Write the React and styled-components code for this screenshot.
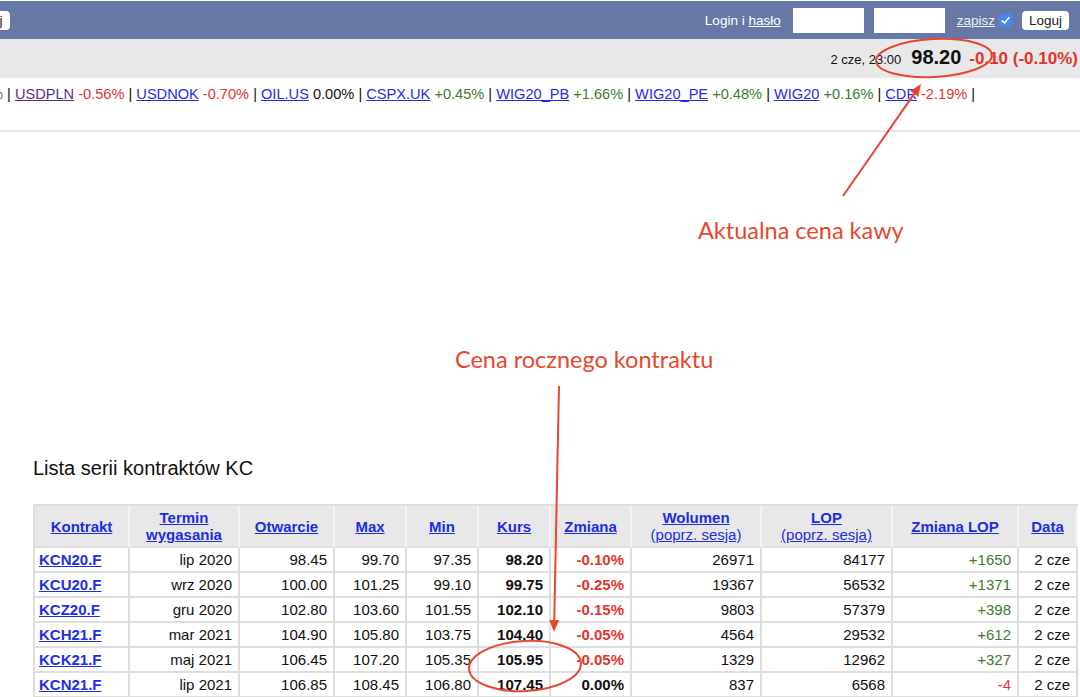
import React from "react";
import styled, { createGlobalStyle } from "styled-components";

const GlobalStyle = createGlobalStyle`
  html, body { margin: 0; padding: 0; background: #fff; }
  body { font-family: "Liberation Sans", Arial, sans-serif; color: #111; }
  a { cursor: pointer; }
`;

const RED = "#e3342f";
const GREEN = "#3c7d2c";
const BLUE = "#1d2ee6";
const NOTE = "#e8472f";

const toneColor = (tone) =>
  tone === "down" ? RED : tone === "up" ? GREEN : "#111";

const Page = styled.div`
  position: relative;
  width: 1080px;
  height: 697px;
  overflow: hidden;
  background: #fff;
`;

// top bar with login form
const TopBar = styled.div`
  margin-top: 1px;
  height: 38px;
  background: #6878a6;
  display: flex;
  align-items: center;
  justify-content: space-between;
  padding-right: 11px;
  color: #fff;
  font-size: 13.5px;
`;

const BarButton = styled.button`
  height: 19px;
  padding: 0 7px;
  border: none;
  border-radius: 4px;
  background: #fff;
  color: #222;
  font-family: inherit;
  font-size: 13.5px;
  margin-left: ${(p) => p.$offset || 0}px;
`;

const LoginForm = styled.div`
  display: flex;
  align-items: center;
`;

const LoginLabel = styled.span`
  margin-right: 12px;
  a {
    color: #fff;
    text-decoration: underline;
  }
`;

const LoginInput = styled.input`
  width: 71px;
  height: 25px;
  box-sizing: border-box;
  border: none;
  background: #fff;
  margin-right: ${(p) => p.$gap}px;
`;

const SaveLink = styled.a`
  color: #eef0f8;
  text-decoration: underline;
  margin-right: 4px;
`;

const Check = styled.span`
  width: 13px;
  height: 13px;
  border-radius: 3px;
  background: #4a86f0;
  display: inline-flex;
  align-items: center;
  justify-content: center;
  margin-right: 10px;
`;

// quote bar
const PriceBar = styled.div`
  height: 39px;
  background: #e8e8e8;
  display: flex;
  justify-content: flex-end;
  align-items: baseline;
  padding-right: 2px;
  box-sizing: border-box;
  padding-top: 7px;
`;

const PriceDate = styled.span`
  font-size: 13px;
  margin-right: 10px;
`;

const PriceValue = styled.span`
  font-size: 20px;
  font-weight: bold;
  margin-right: 8px;
`;

const PriceChange = styled.span`
  font-size: 17px;
  font-weight: bold;
  color: ${RED};
`;

// ticker
const Ticker = styled.div`
  height: 54px;
  box-sizing: border-box;
  padding-top: 7px;
  border-bottom: 2px solid #e6e6e6;
  font-size: 14.6px;
  line-height: 18px;
  white-space: nowrap;
`;

const Lead = styled.span`
  margin-left: -10px;
  color: ${GREEN};
`;

const TickLink = styled.a`
  color: ${(p) => (p.$visited ? "#5b2d8e" : BLUE)};
  text-decoration: underline;
`;

const TickValue = styled.span`
  color: ${(p) => toneColor(p.$tone)};
`;

// contracts section
const Section = styled.div`
  padding: 325px 0 0 33px;
`;

const Title = styled.div`
  font-size: 20px;
  line-height: 23px;
  margin-bottom: 24px;
`;

const Table = styled.table`
  border-spacing: 0;
  border-top: 2px solid #dedede;
  border-left: 2px solid #dedede;
  table-layout: fixed;
  width: 1043px;
  font-size: 15px;
  line-height: 17px;
`;

const Th = styled.th`
  background: #e8e8e8;
  padding: 3px 4px;
  border-right: 2px solid #f4f4f4;
  border-bottom: 2px solid #dedede;
  text-align: center;
  font-weight: bold;
  a {
    color: ${BLUE};
    text-decoration: underline;
  }
`;

const Sub = styled.a`
  font-weight: normal;
`;

const Td = styled.td`
  padding: 3px 6px 3px 4px;
  border-right: 2px solid #dedede;
  border-bottom: 2px solid #dedede;
  text-align: ${(p) => (p.$left ? "left" : "right")};
  font-weight: ${(p) => (p.$bold ? "bold" : "normal")};
  color: ${(p) => (p.$tone ? toneColor(p.$tone) : "#111")};
  white-space: nowrap;
  a {
    color: ${BLUE};
    font-weight: bold;
    text-decoration: underline;
  }
`;

// annotations drawn over the page
const Overlay = styled.svg`
  position: absolute;
  left: 0;
  top: 0;
  pointer-events: none;
`;

const Note = styled.div`
  position: absolute;
  left: ${(p) => p.$x}px;
  top: ${(p) => p.$y}px;
  font-family: Lato, "Open Sans", sans-serif;
  font-size: 23.5px;
  line-height: 28px;
  color: ${NOTE};
  white-space: nowrap;
`;

const ticker = [
  { name: "USDPLN", val: "-0.56%", tone: "down", visited: true },
  { name: "USDNOK", val: "-0.70%", tone: "down" },
  { name: "OIL.US", val: "0.00%", tone: "flat" },
  { name: "CSPX.UK", val: "+0.45%", tone: "up" },
  { name: "WIG20_PB", val: "+1.66%", tone: "up" },
  { name: "WIG20_PE", val: "+0.48%", tone: "up" },
  { name: "WIG20", val: "+0.16%", tone: "up" },
  { name: "CDR", val: "-2.19%", tone: "down" },
];

const widths = [95, 110, 95, 72, 72, 72, 81, 130, 131, 126, 59];

const rows = [
  ["KCN20.F", "lip 2020", "98.45", "99.70", "97.35", "98.20", "-0.10%", "26971", "84177", "+1650"],
  ["KCU20.F", "wrz 2020", "100.00", "101.25", "99.10", "99.75", "-0.25%", "19367", "56532", "+1371"],
  ["KCZ20.F", "gru 2020", "102.80", "103.60", "101.55", "102.10", "-0.15%", "9803", "57379", "+398"],
  ["KCH21.F", "mar 2021", "104.90", "105.80", "103.75", "104.40", "-0.05%", "4564", "29532", "+612"],
  ["KCK21.F", "maj 2021", "106.45", "107.20", "105.35", "105.95", "-0.05%", "1329", "12962", "+327"],
  ["KCN21.F", "lip 2021", "106.85", "108.45", "106.80", "107.45", "0.00%", "837", "6568", "-4"],
  ["KCU21.F", "wrz 2021", "108.30", "109.70", "108.30", "108.95", "0.00%", "412", "4120", "+12"],
];

const sign = (v) => (v.startsWith("-") ? "down" : v.startsWith("+") ? "up" : "flat");

const CheckMark = () => (
  <svg width="9" height="9" viewBox="0 0 9 9">
    <path d="M1.2 4.8 L3.5 7 L7.8 1.8" fill="none" stroke="#fff" strokeWidth="1.6" strokeLinecap="round" strokeLinejoin="round" />
  </svg>
);

const Arrow = ({ x1, y1, x2, y2 }) => {
  const a = Math.atan2(y2 - y1, x2 - x1);
  const len = 12;
  const w = 5;
  const bx = x2 - len * Math.cos(a);
  const by = y2 - len * Math.sin(a);
  const px = -Math.sin(a) * w;
  const py = Math.cos(a) * w;
  return (
    <g>
      <line x1={x1} y1={y1} x2={bx} y2={by} stroke={NOTE} strokeWidth="2" />
      <polygon points={`${x2},${y2} ${bx + px},${by + py} ${bx - px},${by - py}`} fill={NOTE} />
    </g>
  );
};

export default function App() {
  return (
    <Page>
      <GlobalStyle />
      <TopBar>
        <BarButton $offset={-45}>Szukaj</BarButton>
        <LoginForm>
          <LoginLabel>
            Login i <a>hasło</a>
          </LoginLabel>
          <LoginInput $gap={10} />
          <LoginInput $gap={12} type="password" />
          <SaveLink>zapisz</SaveLink>
          <Check>
            <CheckMark />
          </Check>
          <BarButton>Loguj</BarButton>
        </LoginForm>
      </TopBar>

      <PriceBar>
        <PriceDate>2 cze, 23:00</PriceDate>
        <PriceValue>98.20</PriceValue>
        <PriceChange>-0.10 (-0.10%)</PriceChange>
      </PriceBar>

      <Ticker>
        <Lead>%</Lead> |{" "}
        {ticker.map((t) => (
          <React.Fragment key={t.name}>
            <TickLink $visited={t.visited}>{t.name}</TickLink>{" "}
            <TickValue $tone={t.tone}>{t.val}</TickValue> |{" "}
          </React.Fragment>
        ))}
      </Ticker>

      <Section>
        <Title>Lista serii kontraktów KC</Title>
        <Table>
          <colgroup>
            {widths.map((w, i) => (
              <col key={i} style={{ width: w }} />
            ))}
          </colgroup>
          <thead>
            <tr>
              <Th><a>Kontrakt</a></Th>
              <Th><a>Termin<br />wygasania</a></Th>
              <Th><a>Otwarcie</a></Th>
              <Th><a>Max</a></Th>
              <Th><a>Min</a></Th>
              <Th><a>Kurs</a></Th>
              <Th><a>Zmiana</a></Th>
              <Th><a>Wolumen</a><br /><Sub>(poprz. sesja)</Sub></Th>
              <Th><a>LOP</a><br /><Sub>(poprz. sesja)</Sub></Th>
              <Th><a>Zmiana LOP</a></Th>
              <Th><a>Data</a></Th>
            </tr>
          </thead>
          <tbody>
            {rows.map((r) => (
              <tr key={r[0]}>
                <Td $left><a>{r[0]}</a></Td>
                <Td>{r[1]}</Td>
                <Td>{r[2]}</Td>
                <Td>{r[3]}</Td>
                <Td>{r[4]}</Td>
                <Td $bold>{r[5]}</Td>
                <Td $bold $tone={sign(r[6])}>{r[6]}</Td>
                <Td>{r[7]}</Td>
                <Td>{r[8]}</Td>
                <Td $tone={sign(r[9])}>{r[9]}</Td>
                <Td>2 cze</Td>
              </tr>
            ))}
          </tbody>
        </Table>
      </Section>

      <Note $x={698} $y={216}>Aktualna cena kawy</Note>
      <Note $x={455} $y={345}>Cena rocznego kontraktu</Note>

      <Overlay width="1080" height="697" viewBox="0 0 1080 697">
        <ellipse cx="934" cy="58" rx="58" ry="19" transform="rotate(-3 934 58)" fill="none" stroke={NOTE} strokeWidth="2" />
        <ellipse cx="525" cy="666" rx="56" ry="25" transform="rotate(-3 525 666)" fill="none" stroke={NOTE} strokeWidth="2" />
        <Arrow x1={843} y1={196} x2={921} y2={84} />
        <Arrow x1={559} y1={386} x2={554} y2={632} />
      </Overlay>
    </Page>
  );
}
